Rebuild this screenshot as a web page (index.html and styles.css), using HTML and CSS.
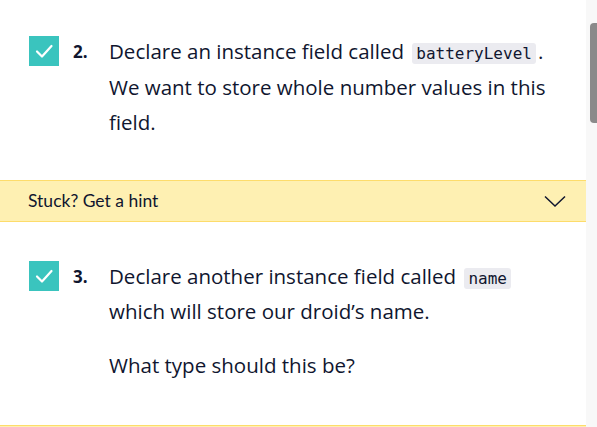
FILE: index.html
```html
<!DOCTYPE html>
<html>
<head>
<meta charset="utf-8">
<link rel="stylesheet" href="styles.css">
</head>
<body>
<div class="page">
  <main class="content">
    <div class="task first">
      <span class="check"><svg viewBox="0 0 30 30" width="30" height="30"><path d="M8 15.5 L13 20.5 L22.5 10" fill="none" stroke="#fff" stroke-width="2.2" stroke-linecap="round" stroke-linejoin="round"/></svg></span>
      <span class="num">2.</span>
      <div class="body">
        <p>Declare an instance field called <code>batteryLevel</code>. We want to store whole number values in this field.</p>
      </div>
    </div>
    <div class="hint">
      <span>Stuck? Get a hint</span>
      <svg class="chev" viewBox="0 0 22 13" width="22" height="13"><path d="M1 1.5 L11 11 L21 1.5" fill="none" stroke="#10162f" stroke-width="1.5"/></svg>
    </div>
    <div class="task second">
      <span class="check"><svg viewBox="0 0 30 30" width="30" height="30"><path d="M8 15.5 L13 20.5 L22.5 10" fill="none" stroke="#fff" stroke-width="2.2" stroke-linecap="round" stroke-linejoin="round"/></svg></span>
      <span class="num">3.</span>
      <div class="body">
        <p>Declare another instance field called <code>name</code> which will store our droid’s name.</p>
        <p class="gap">What type should this be?</p>
      </div>
    </div>
    <div class="hint bottom"></div>
  </main>
  <div class="scrolltrack"><div class="thumb"></div></div>
</div>
</body>
</html>
```

FILE: styles.css
```css
html, body {
  margin: 0;
  padding: 0;
  background: #fff;
}
.page {
  display: flex;
  width: 597px;
  height: 427px;
  overflow: hidden;
}
.content {
  width: 586px;
  flex: none;
  font-family: "Open Sans", "Noto Sans", sans-serif;
  color: #10162f;
}
.scrolltrack {
  flex: 1;
  background: #f8f8f8;
  padding-top: 23px;
  display: flex;
  justify-content: flex-end;
}
.thumb {
  width: 7px;
  height: 100px;
  background: #8a8a8a;
  border-radius: 4px 0 0 4px;
}
.task {
  display: flex;
  align-items: flex-start;
  padding-left: 29px;
  padding-right: 30px;
}
.first {
  padding-top: 34px;
  padding-bottom: 39px;
}
.second {
  padding-top: 37px;
  padding-bottom: 42px;
}
.check {
  flex: none;
  width: 30px;
  height: 30px;
  margin-top: 2px;
  background: #3ac4be;
  display: block;
}
.check svg {
  display: block;
}
.num {
  flex: none;
  width: 36px;
  margin-left: 14px;
  font-weight: 700;
  font-size: 17px;
  line-height: 35px;
}
.body {
  flex: 1;
}
.body p {
  margin: 0;
  font-size: 20.5px;
  line-height: 35.5px;
}
.body p.gap {
  margin-top: 18px;
}
code {
  font-family: "DejaVu Sans Mono", monospace;
  font-size: 16px;
  line-height: 1;
  background: #ebebf0;
  border-radius: 3px;
  padding: 1px 4px;
  margin: 0 2px 0 3px;
}
.hint {
  height: 40px;
  background: #fef0b2;
  border-top: 1px solid #fddc6b;
  border-bottom: 1px solid #fddc6b;
  display: flex;
  align-items: center;
  justify-content: space-between;
  padding: 0 20px 0 28px;
  font-family: "Lato", sans-serif;
  font-size: 17.5px;
}
.chev {
  display: block;
  margin-top: 1px;
}
.hint.bottom {
  height: 20px;
  border-bottom: none;
}
```
